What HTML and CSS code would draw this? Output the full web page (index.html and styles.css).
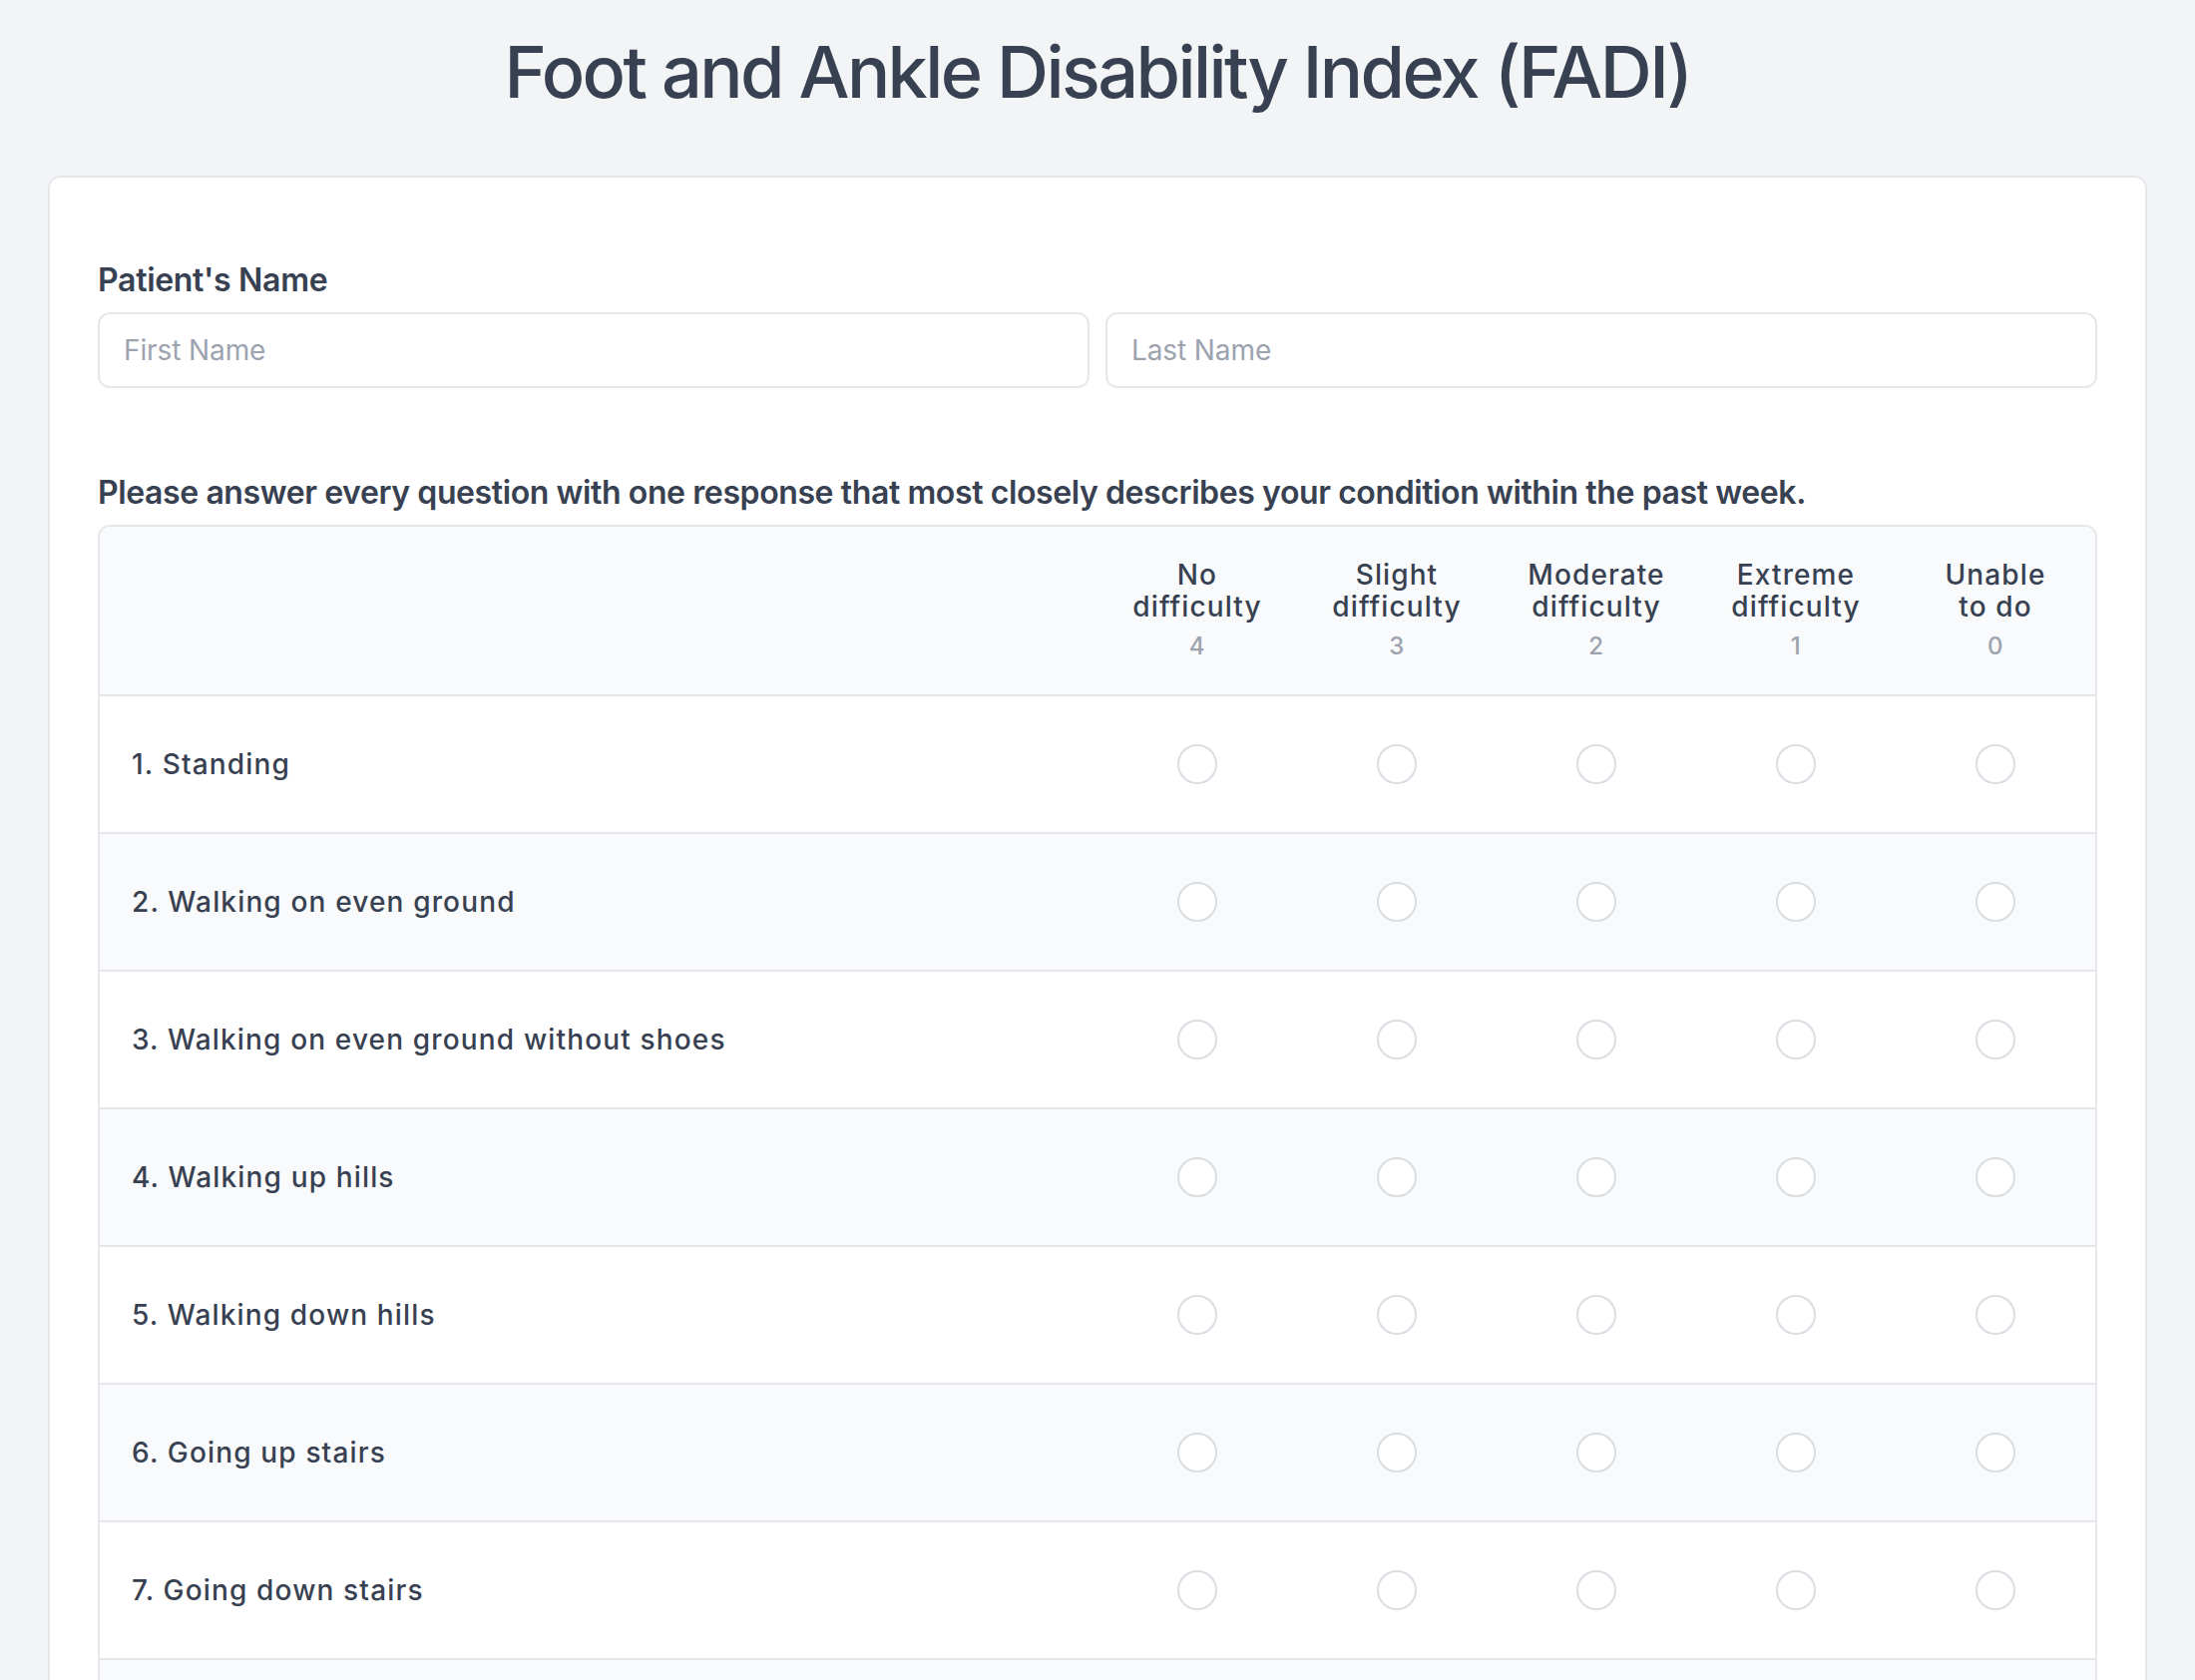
FILE: index.html
```html
<!DOCTYPE html>
<html lang="en">
<head>
<meta charset="utf-8">
<title>Foot and Ankle Disability Index (FADI)</title>
<link rel="stylesheet" href="styles.css">
</head>
<body>
<main class="page">
  <h1 class="title">Foot and Ankle Disability Index (FADI)</h1>
  <section class="card">
    <div class="field">
      <label class="field-label">Patient's Name</label>
      <div class="name-row">
        <input class="text-input" type="text" placeholder="First Name">
        <input class="text-input" type="text" placeholder="Last Name">
      </div>
    </div>

    <p class="instructions">Please answer every question with one response that most closely describes your condition within the past week.</p>

    <div class="table-wrap">
      <table class="survey">
        <colgroup>
          <col class="col-question">
          <col class="col-option"><col class="col-option"><col class="col-option"><col class="col-option"><col class="col-option">
        </colgroup>
        <thead>
          <tr>
            <th class="th-blank"></th>
            <th><span class="opt-name">No<br>difficulty</span><span class="opt-score">4</span></th>
            <th><span class="opt-name">Slight<br>difficulty</span><span class="opt-score">3</span></th>
            <th><span class="opt-name">Moderate<br>difficulty</span><span class="opt-score">2</span></th>
            <th><span class="opt-name">Extreme<br>difficulty</span><span class="opt-score">1</span></th>
            <th><span class="opt-name">Unable<br>to do</span><span class="opt-score">0</span></th>
          </tr>
        </thead>
        <tbody>
          <tr><td class="q">1. Standing</td><td><input class="radio" type="radio" name="q1"></td><td><input class="radio" type="radio" name="q1"></td><td><input class="radio" type="radio" name="q1"></td><td><input class="radio" type="radio" name="q1"></td><td><input class="radio" type="radio" name="q1"></td></tr>
          <tr><td class="q">2. Walking on even ground</td><td><input class="radio" type="radio" name="q2"></td><td><input class="radio" type="radio" name="q2"></td><td><input class="radio" type="radio" name="q2"></td><td><input class="radio" type="radio" name="q2"></td><td><input class="radio" type="radio" name="q2"></td></tr>
          <tr><td class="q">3. Walking on even ground without shoes</td><td><input class="radio" type="radio" name="q3"></td><td><input class="radio" type="radio" name="q3"></td><td><input class="radio" type="radio" name="q3"></td><td><input class="radio" type="radio" name="q3"></td><td><input class="radio" type="radio" name="q3"></td></tr>
          <tr><td class="q">4. Walking up hills</td><td><input class="radio" type="radio" name="q4"></td><td><input class="radio" type="radio" name="q4"></td><td><input class="radio" type="radio" name="q4"></td><td><input class="radio" type="radio" name="q4"></td><td><input class="radio" type="radio" name="q4"></td></tr>
          <tr><td class="q">5. Walking down hills</td><td><input class="radio" type="radio" name="q5"></td><td><input class="radio" type="radio" name="q5"></td><td><input class="radio" type="radio" name="q5"></td><td><input class="radio" type="radio" name="q5"></td><td><input class="radio" type="radio" name="q5"></td></tr>
          <tr><td class="q">6. Going up stairs</td><td><input class="radio" type="radio" name="q6"></td><td><input class="radio" type="radio" name="q6"></td><td><input class="radio" type="radio" name="q6"></td><td><input class="radio" type="radio" name="q6"></td><td><input class="radio" type="radio" name="q6"></td></tr>
          <tr><td class="q">7. Going down stairs</td><td><input class="radio" type="radio" name="q7"></td><td><input class="radio" type="radio" name="q7"></td><td><input class="radio" type="radio" name="q7"></td><td><input class="radio" type="radio" name="q7"></td><td><input class="radio" type="radio" name="q7"></td></tr>
          <tr><td class="q">8. Walking on uneven ground</td><td><input class="radio" type="radio" name="q8"></td><td><input class="radio" type="radio" name="q8"></td><td><input class="radio" type="radio" name="q8"></td><td><input class="radio" type="radio" name="q8"></td><td><input class="radio" type="radio" name="q8"></td></tr>
          <tr><td class="q">9. Stepping up and down curbs</td><td><input class="radio" type="radio" name="q9"></td><td><input class="radio" type="radio" name="q9"></td><td><input class="radio" type="radio" name="q9"></td><td><input class="radio" type="radio" name="q9"></td><td><input class="radio" type="radio" name="q9"></td></tr>
          <tr><td class="q">10. Squatting</td><td><input class="radio" type="radio" name="q10"></td><td><input class="radio" type="radio" name="q10"></td><td><input class="radio" type="radio" name="q10"></td><td><input class="radio" type="radio" name="q10"></td><td><input class="radio" type="radio" name="q10"></td></tr>
        </tbody>
      </table>
    </div>
  </section>
</main>
</body>
</html>
```

FILE: styles.css
```css
* { box-sizing: border-box; }

html, body {
  margin: 0;
  padding: 0;
  background: #f3f4f6;
}

body {
  font-family: Inter, "Noto Sans", "Liberation Sans", sans-serif;
  color: #374151;
}

.page {
  padding: 32px 48px 64px;
}

.title {
  margin: 0 0 64px;
  text-align: center;
  font-size: 72px;
  line-height: 80px;
  font-weight: 500;
  color: #374151;
  letter-spacing: -2.6px;
}

.card {
  background: #ffffff;
  border: 2px solid #e5e7eb;
  border-radius: 12px;
  padding: 79px 48px 48px;
}

.field-label {
  display: block;
  font-size: 32px;
  line-height: 48px;
  font-weight: 600;
  color: #374151;
  margin-bottom: 8px;
  letter-spacing: -0.3px;
}

.name-row {
  display: grid;
  grid-template-columns: 1fr 1fr;
  gap: 16px;
}

.text-input {
  height: 76px;
  width: 100%;
  border: 2px solid #e5e7eb;
  border-radius: 12px;
  padding: 0 24px;
  font-family: Inter, "Noto Sans", "Liberation Sans", sans-serif;
  font-size: 28px;
  letter-spacing: -0.1px;
  color: #374151;
  background: #ffffff;
  outline: none;
}

.text-input::placeholder {
  color: #9ca3af;
}

.instructions {
  margin: 81px 0 8px;
  font-size: 32px;
  line-height: 48px;
  font-weight: 600;
  color: #374151;
  letter-spacing: -0.4px;
}

.table-wrap {
  border: 2px solid #e5e7eb;
  border-radius: 12px;
  overflow: hidden;
}

.survey {
  width: 100%;
  border-collapse: collapse;
  table-layout: fixed;
}

.col-option {
  width: 200px;
}

.survey thead tr {
  background: #f9fafb;
}

.survey th {
  padding: 32px 8px;
  text-align: center;
  vertical-align: top;
  font-weight: 500;
  border-bottom: 2px solid #e5e7eb;
}

.opt-name {
  display: block;
  font-size: 28px;
  line-height: 32px;
  letter-spacing: 1.1px;
  color: #374151;
}

.opt-score {
  display: block;
  margin-top: 8px;
  font-size: 24px;
  line-height: 32px;
  font-weight: 500;
  letter-spacing: 0.6px;
  color: #9ca3af;
}

.survey td {
  padding: 48px 0;
  text-align: center;
  vertical-align: middle;
  border-bottom: 2px solid #e5e7eb;
}

.survey tbody tr:nth-child(even) {
  background: #f9fafb;
}

.survey td.q {
  text-align: left;
  padding-left: 32px;
  font-size: 28px;
  line-height: 40px;
  font-weight: 500;
  letter-spacing: 1.15px;
  color: #374151;
}

.radio {
  appearance: none;
  -webkit-appearance: none;
  display: block;
  margin: 0 auto;
  width: 40px;
  height: 40px;
  border: 2px solid #dadde2;
  border-radius: 50%;
  background: #ffffff;
}
```
